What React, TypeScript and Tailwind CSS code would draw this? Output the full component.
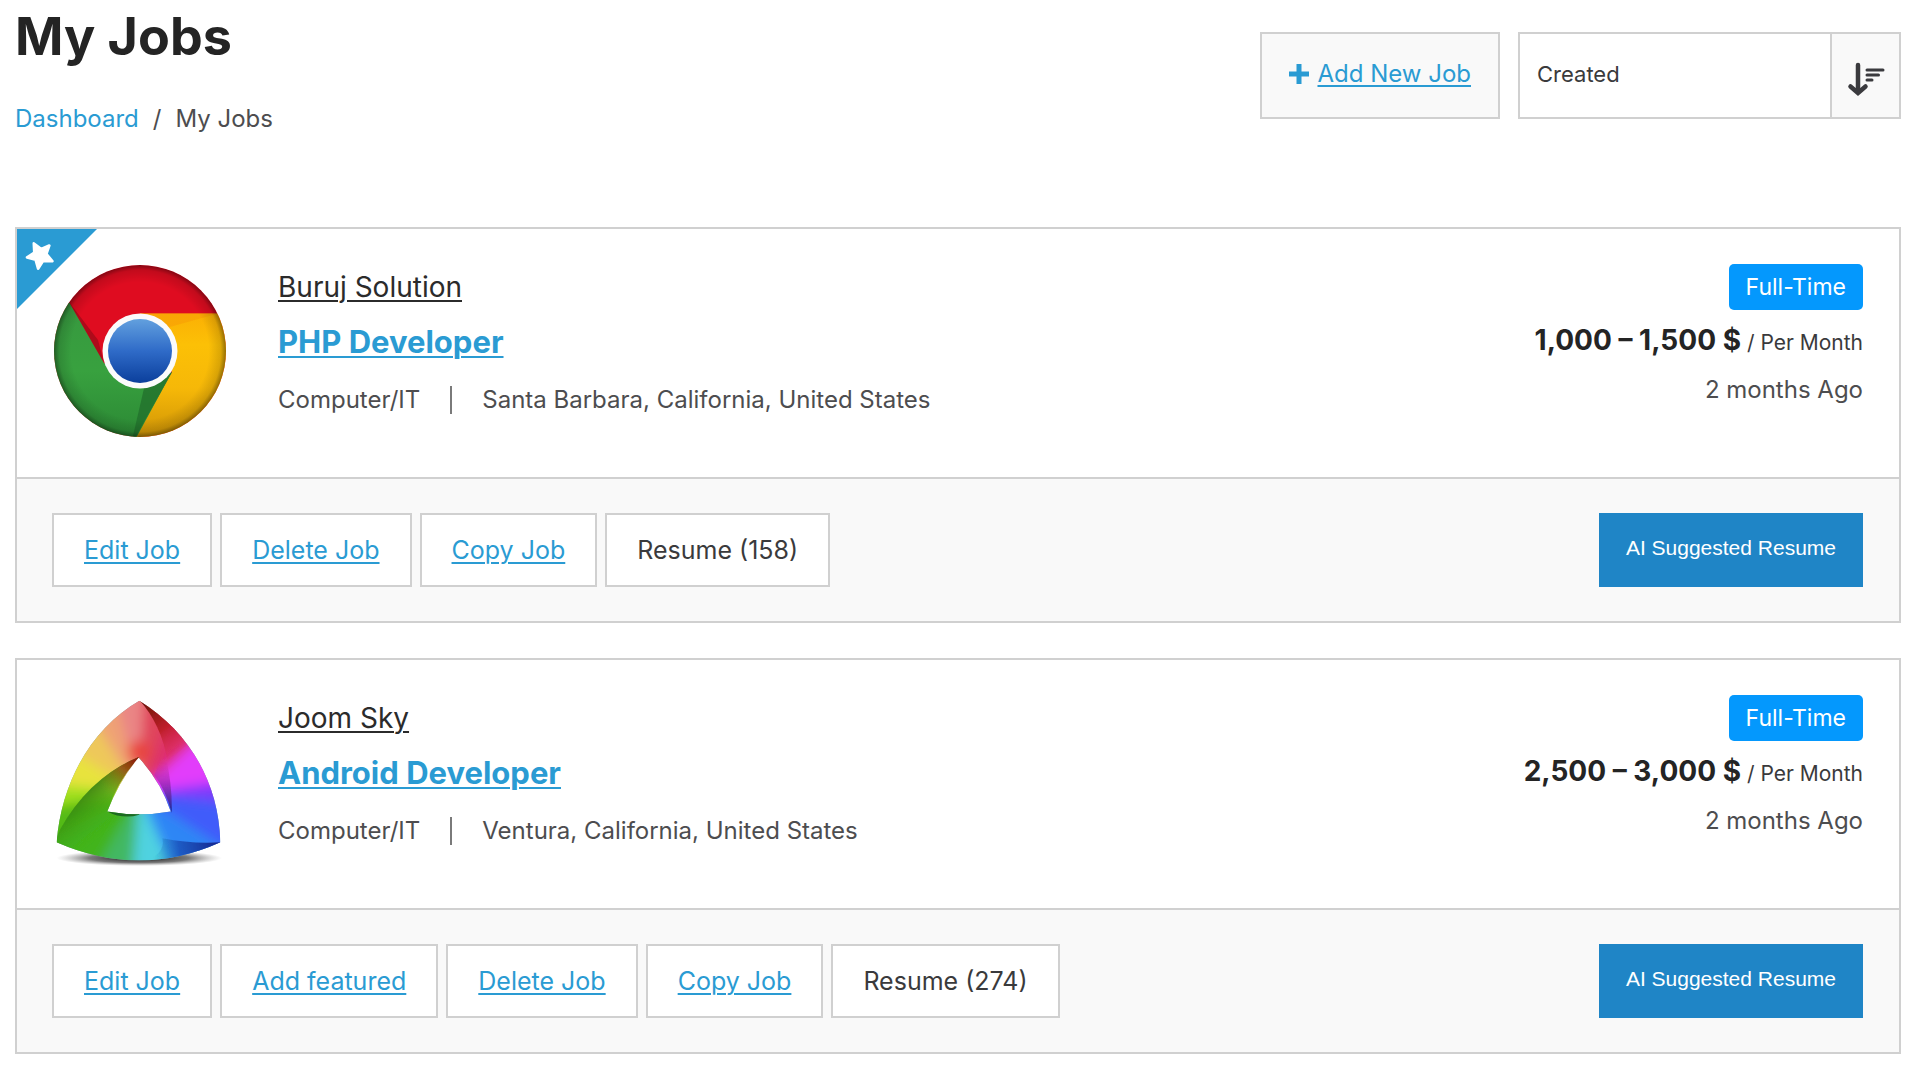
import React from "react";

type Job = {
  company: string;
  title: string;
  category: string;
  location: string;
  salary: string;
  posted: string;
  actions: string[];
  resumes: number;
  featured: boolean;
  logo: React.ReactNode;
};

function ChromeLogo() {
  return (
    <svg viewBox="0 0 172 174" className="h-[174px] w-[172px]" role="img" aria-label="Buruj Solution logo">
      <defs>
        <clipPath id="disc">
          <circle cx="86" cy="87" r="86" />
        </clipPath>
        <radialGradient id="rim">
          <stop offset="0.8" stopColor="#000" stopOpacity="0" />
          <stop offset="0.94" stopColor="#000" stopOpacity="0.13" />
          <stop offset="1" stopColor="#000" stopOpacity="0.42" />
        </radialGradient>
        <linearGradient id="core" x1="0" y1="0" x2="0" y2="1">
          <stop offset="0" stopColor="#62a0de" />
          <stop offset="0.5" stopColor="#2f6bc8" />
          <stop offset="1" stopColor="#0b3f9c" />
        </linearGradient>
        <linearGradient id="yellow" x1="0" y1="0" x2="0" y2="1">
          <stop offset="0" stopColor="#fbb004" />
          <stop offset="0.25" stopColor="#fcc006" />
          <stop offset="0.6" stopColor="#f6b808" />
          <stop offset="1" stopColor="#cf9406" />
        </linearGradient>
        <linearGradient id="green" x1="0" y1="0" x2="0" y2="1">
          <stop offset="0" stopColor="#37983f" />
          <stop offset="0.5" stopColor="#38a13f" />
          <stop offset="1" stopColor="#2b8834" />
        </linearGradient>
      </defs>
      <g clipPath="url(#disc)">
        <rect width="172" height="174" fill="#df0c20" />
        <path d="M86 49.500H172V174H81L118 108Z" fill="url(#yellow)" />
        <path d="M86 49.500H164L112 64Z" fill="#f89f05" opacity="0.6" />
        <path d="M15 38L50 99L86 124L118 108L81 176H0V38Z" fill="url(#green)" />
        <path d="M91 120L118 108L81 174L79 172Z" fill="#226f2c" opacity="0.75" />
        <path d="M15 38L50 99L44 76Z" fill="#7d0a14" opacity="0.5" />
        <circle cx="86" cy="87" r="86" fill="url(#rim)" />
      </g>
      <circle cx="86" cy="87" r="37.500" fill="#fbfbfb" />
      <circle cx="86" cy="87" r="32" fill="url(#core)" />
    </svg>
  );
}

const wheel = [
  { d: "M300 340L180 -100H330Z", fill: "#ea8585" },
  { d: "M300 340L320 -100H500Z", fill: "#e0455c" },
  { d: "M300 340L460 -60L620 60Z", fill: "#de2f6a" },
  { d: "M300 340L600 60L700 300Z", fill: "#e23dfb" },
  { d: "M300 340L700 285V390Z", fill: "#7c3bfb" },
  { d: "M300 340L700 380V620Z", fill: "#3f5cfa" },
  { d: "M300 340L700 600L440 700Z", fill: "#2f86f5" },
  { d: "M300 340L460 700H250Z", fill: "#4fd2e0" },
  { d: "M300 340L270 700L60 700Z", fill: "#42b863" },
  { d: "M300 340L100 700L-100 520Z", fill: "#43b41c" },
  { d: "M300 340L-100 540V390Z", fill: "#55bb12" },
  { d: "M300 340L-100 400V280Z", fill: "#a0e01e" },
  { d: "M300 340L-100 300V80Z", fill: "#e8e33c" },
  { d: "M300 340L-100 90L60 -60Z", fill: "#eec85a" },
  { d: "M300 340L50 -60L190 -100Z", fill: "#efa275" },
];

function PrismLogo() {
  return (
    <svg viewBox="42 45 520 522" className="h-[174px] w-[172px]" role="img" aria-label="Joom Sky logo">
      <defs>
        <clipPath id="prism">
          <path
            clipRule="evenodd"
            d="M300 60C445 150 540 300 545 488Q300 598 50 488C65 300 160 140 300 60ZM298 232Q240 300 203 395Q300 412 395 395Q365 305 298 232Z"
          />
        </clipPath>
        <filter id="soft" x="-50%" y="-50%" width="200%" height="200%">
          <feGaussianBlur stdDeviation="18" />
        </filter>
        <filter id="edge" x="-30%" y="-30%" width="160%" height="160%">
          <feGaussianBlur stdDeviation="2" />
        </filter>
        <radialGradient id="ground">
          <stop offset="0" stopColor="#000" stopOpacity="0.95" />
          <stop offset="0.6" stopColor="#222" stopOpacity="0.6" />
          <stop offset="1" stopColor="#777" stopOpacity="0" />
        </radialGradient>
        <linearGradient id="foldTop" x1="310" y1="70" x2="420" y2="230" gradientUnits="userSpaceOnUse">
          <stop offset="0" stopColor="#6b1208" />
          <stop offset="0.5" stopColor="#b81a20" stopOpacity="0.85" />
          <stop offset="1" stopColor="#e0305a" stopOpacity="0" />
        </linearGradient>
        <linearGradient id="foldLeft" x1="130" y1="340" x2="215" y2="450" gradientUnits="userSpaceOnUse">
          <stop offset="0" stopColor="#2c7a0c" stopOpacity="0.85" />
          <stop offset="0.45" stopColor="#3a9a10" stopOpacity="0.6" />
          <stop offset="1" stopColor="#43b41c" stopOpacity="0" />
        </linearGradient>
        <linearGradient id="foldPeak" x1="296" y1="236" x2="205" y2="340" gradientUnits="userSpaceOnUse">
          <stop offset="0" stopColor="#8c1408" />
          <stop offset="0.4" stopColor="#9a5a14" stopOpacity="0.9" />
          <stop offset="1" stopColor="#7aa010" stopOpacity="0" />
        </linearGradient>
        <linearGradient id="foldRight" x1="540" y1="490" x2="340" y2="520" gradientUnits="userSpaceOnUse">
          <stop offset="0" stopColor="#14248c" />
          <stop offset="0.6" stopColor="#1c50b8" stopOpacity="0.8" />
          <stop offset="1" stopColor="#1c90b8" stopOpacity="0" />
        </linearGradient>
        <linearGradient id="foldInner" x1="380" y1="230" x2="392" y2="395" gradientUnits="userSpaceOnUse">
          <stop offset="0" stopColor="#e030a0" stopOpacity="0" />
          <stop offset="0.5" stopColor="#9a28b4" stopOpacity="0.8" />
          <stop offset="1" stopColor="#1a2a98" />
        </linearGradient>
      </defs>
      <ellipse cx="300" cy="536" rx="250" ry="24" fill="url(#ground)" />
      <g clipPath="url(#prism)">
        <rect x="0" y="0" width="600" height="600" fill="#80a0a0" />
        <g filter="url(#soft)">
          {wheel.map((w) => (
            <path key={w.fill} d={w.d} fill={w.fill} />
          ))}
          <circle cx="300" cy="215" r="34" fill="#e8453c" />
        </g>
        <g filter="url(#edge)">
          <path d="M300 58Q365 130 385 240L450 190Q400 110 300 58Z" fill="url(#foldTop)" />
          <path d="M300 230Q150 290 60 450L40 500L260 560V400L203 395Q235 300 300 230Z" fill="url(#foldLeft)" />
          <path d="M300 230Q230 258 172 310L190 400L203 395Q235 300 300 230Z" fill="url(#foldPeak)" />
          <path d="M375 215Q400 300 398 400Q380 330 345 285Z" fill="url(#foldInner)" />
          <path d="M548 488Q460 494 370 476Q380 530 300 548L440 540Z" fill="url(#foldRight)" />
          <path d="M203 395Q250 420 300 405V403Q250 402 203 395Z" fill="#1f6a20" />
        </g>
      </g>
    </svg>
  );
}

function FeaturedRibbon() {
  return (
    <svg viewBox="0 0 80 80" className="absolute left-0 top-0 size-20" role="img" aria-label="Featured">
      <path d="M0 0H80L0 80Z" fill="#2a9bd3" />
      <path
        d="M0 -14L4.200 -5L13.500 -4.200L6.500 2.200L8.600 12L0 7L-8.600 12L-6.500 2.200L-13.500 -4.200L-4.200 -5Z"
        transform="translate(23 26) rotate(-28) scale(0.93)"
        fill="#fff"
        stroke="#fff"
        strokeWidth="3"
        strokeLinejoin="round"
      />
    </svg>
  );
}

const jobs: Job[] = [
  {
    company: "Buruj Solution",
    title: "PHP Developer",
    category: "Computer/IT",
    location: "Santa Barbara, California, United States",
    salary: "1,000 – 1,500 $",
    posted: "2 months Ago",
    actions: ["Edit Job", "Delete Job", "Copy Job"],
    resumes: 158,
    featured: true,
    logo: <ChromeLogo />,
  },
  {
    company: "Joom Sky",
    title: "Android Developer",
    category: "Computer/IT",
    location: "Ventura, California, United States",
    salary: "2,500 – 3,000 $",
    posted: "2 months Ago",
    actions: ["Edit Job", "Add featured", "Delete Job", "Copy Job"],
    resumes: 274,
    featured: false,
    logo: <PrismLogo />,
  },
];

function JobCard({ job }: { job: Job }) {
  return (
    <article className="relative border-2 border-[#d0d0d0] bg-white">
      {job.featured && <FeaturedRibbon />}
      <div className="flex items-start justify-between pt-[35px] pr-9 pb-[39px] pl-[37px]">
        <div className="flex items-start gap-[52px]">
          {job.logo}
          <div className="pt-[7px]">
            <p className="text-[28px] leading-8 text-[#2b2b2b]">
              <a href="#company" className="underline decoration-2 underline-offset-3">
                {job.company}
              </a>
            </p>
            <h2 className="mt-[19px] text-[31px] leading-10 font-bold text-[#2a9bd3]">
              <a href="#job" className="underline decoration-2 underline-offset-3">
                {job.title}
              </a>
            </h2>
            <p className="mt-[22px] flex items-center text-[24px] leading-8 text-[#4d4d4f]">
              <span>{job.category}</span>
              <span className="mx-[30px] h-7 w-0.5 bg-[#7a7a7a]" />
              <span>{job.location}</span>
            </p>
          </div>
        </div>
        <div className="flex flex-col items-end">
          <span className="rounded-[5px] bg-[#0498fd] px-[17px] text-[23px] leading-[46px] text-white">Full-Time</span>
          <p className="mt-2.5 leading-10 text-[#3a3a3c]">
            <strong className="text-[28px] font-bold text-[#242424]">{job.salary}</strong>
            <span className="text-[21px]"> / Per Month</span>
          </p>
          <p className="mt-2.5 text-[24px] leading-8 text-[#4d4d4f]">{job.posted}</p>
        </div>
      </div>
      <div className="flex items-center justify-between border-t-2 border-[#d0d0d0] bg-[#f9f9f9] py-[34px] pr-9 pl-[35px]">
        <div className="flex gap-2">
          {job.actions.map((label) => (
            <a
              key={label}
              href="#action"
              className="border-2 border-[#d0d0d0] bg-white px-[30px] py-[17px] text-[25px] leading-9 text-[#2a9bd3] underline decoration-2 underline-offset-3"
            >
              {label}
            </a>
          ))}
          <button type="button" className="border-2 border-[#d0d0d0] bg-white px-[30px] py-[17px] text-[25px] leading-9 text-[#3a3a3c]">
            Resume ({job.resumes})
          </button>
        </div>
        <button
          type="button"
          className="bg-[#1f85c6] px-[27px] pt-[17px] pb-[21px] font-['Liberation_Sans',sans-serif] text-[21px] leading-9 text-white"
        >
          AI Suggested Resume
        </button>
      </div>
    </article>
  );
}

export default function App() {
  return (
    <main className="min-h-screen bg-white pr-[19px] pb-4 pl-[15px] font-[Inter,sans-serif]">
      <header className="flex items-start justify-between">
        <div className="pt-[5px]">
          <h1 className="text-[52px] leading-16 font-bold text-[#242424]">My Jobs</h1>
          <nav aria-label="Breadcrumb" className="mt-[34px] flex gap-3.5 text-[24px] leading-8 text-[#4d4d4f]">
            <a href="#dashboard" className="text-[#2a9bd3]">
              Dashboard
            </a>
            <span>/</span>
            <span>My Jobs</span>
          </nav>
        </div>
        <div className="flex gap-[18px] pt-8">
          <a
            href="#new"
            className="flex h-[87px] items-center gap-2 border-2 border-[#d0d0d0] bg-[#f9f9f9] px-[27px] pb-[3px] text-[24px] leading-8 text-[#2a9bd3]"
          >
            <svg viewBox="0 0 20 20" className="size-5" aria-hidden="true">
              <path d="M10 2.500V17.500M2.500 10H17.500" stroke="#2a9bd3" strokeWidth="5" strokeLinecap="square" />
            </svg>
            <span className="underline decoration-2 underline-offset-3">Add New Job</span>
          </a>
          <div className="flex h-[87px] border-2 border-[#d0d0d0]">
            <select aria-label="Sort by" className="w-[310px] appearance-none bg-white px-[17px] pb-[3px] text-[22px] text-[#3a3a3c]">
              <option>Created</option>
            </select>
            <button
              type="button"
              aria-label="Sort direction"
              className="flex w-[69px] items-center justify-center border-l-2 border-[#d0d0d0] bg-[#f9f9f9] pt-1.5"
            >
              <svg viewBox="0 0 38 34" className="h-[34px] w-[38px]" fill="none" stroke="#3a3a3e" strokeLinecap="round" aria-hidden="true">
                <path d="M11 3V30M3.500 24.500L11 31L18.500 24.500" strokeWidth="4.500" />
                <path d="M20 8H36M20 13H31.500M20 18H25" strokeWidth="3" />
              </svg>
            </button>
          </div>
        </div>
      </header>
      <section aria-label="Jobs" className="mt-23 flex flex-col gap-[35px]">
        {jobs.map((job) => (
          <JobCard key={job.title} job={job} />
        ))}
      </section>
    </main>
  );
}
